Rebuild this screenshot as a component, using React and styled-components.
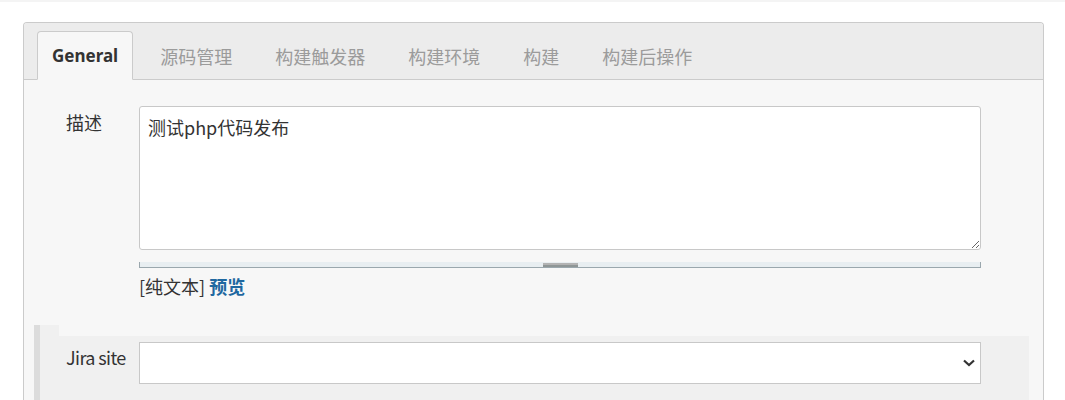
import React from 'react';
import styled, { createGlobalStyle } from 'styled-components';

const GlobalStyle = createGlobalStyle`
  body {
    margin: 0;
    background: #fff;
    font-family: "Noto Sans CJK SC", "Noto Sans", sans-serif;
    color: #333;
  }
`;

const TopStrip = styled.div`
  height: 2px;
  background: #f4f4f4;
`;

const Page = styled.div`
  padding: 20px 21px 0 23px;
`;

const Panel = styled.div`
  border: 1px solid #cbcbcb;
  border-bottom: none;
  border-radius: 4px 4px 0 0;
  background: #f7f7f7;
  height: 380px;
  overflow: hidden;
`;

const TabBar = styled.div`
  display: flex;
  align-items: flex-end;
  gap: 11px;
  padding: 8px 13px 0;
  background: #ececec;
  border-bottom: 1px solid #cbcbcb;
`;

const Tab = styled.div`
  height: 47px;
  display: flex;
  align-items: center;
  padding: 0 ${p => (p.active ? 14 : 15)}px;
  margin-bottom: -1px;
  border: 1px solid ${p => (p.active ? '#cbcbcb' : 'transparent')};
  border-bottom: 1px solid ${p => (p.active ? '#f7f7f7' : 'transparent')};
  border-radius: 4px 4px 0 0;
  background: ${p => (p.active ? '#f7f7f7' : 'transparent')};
  color: ${p => (p.active ? '#333' : '#9b9b9b')};
  font-weight: ${p => (p.active ? 700 : 400)};
  font-family: ${p => (p.active ? '"Noto Sans", "Noto Sans CJK SC", sans-serif' : 'inherit')};
  font-size: ${p => (p.active ? '17px' : '18px')};
`;

const Content = styled.div`
  padding-top: 26px;
`;

const Row = styled.div`
  display: grid;
  grid-template-columns: 73px 842px;
  padding-left: ${p => p.indent}px;
  align-items: start;
`;

const Label = styled.div`
  font-size: 18px;
  line-height: 24px;
  padding-top: ${p => p.top}px;
  letter-spacing: ${p => (p.tight ? '-0.6px' : '0')};
  color: #333;
`;

const TextArea = styled.textarea`
  box-sizing: border-box;
  width: 842px;
  height: 144px;
  display: block;
  margin: 0;
  padding: 7px 8px;
  border: 1px solid #c8c8c8;
  border-radius: 3px;
  background: #fff;
  font-family: "Noto Sans CJK SC", "Noto Sans", sans-serif;
  font-size: 18px;
  line-height: 26px;
  color: #333;
  resize: vertical;
  outline: none;
`;

const Grip = styled.div`
  margin-top: 12px;
  height: 5px;
  background: #e8eef1;
  border: 1px solid #9aa7ad;
  border-top: none;
  display: flex;
  justify-content: center;
`;

const GripHandle = styled.div`
  width: 35px;
  height: 2px;
  margin-top: 1px;
  background: #b3b3b3;
  border-bottom: 2px solid #8f9696;
`;

const Format = styled.div`
  margin-top: 7px;
  font-size: 18px;
  line-height: 22px;
  color: #333;
`;

const Preview = styled.a`
  color: #1f68a0;
  font-weight: 700;
  text-decoration: none;
`;

const Section = styled.div`
  margin: 28px 14px 0 10px;
  border-left: 6px solid #dcdcdc;
`;

const Notch = styled.div`
  width: 19px;
  height: 11px;
  background: #f0f0f0;
`;

const SectionBody = styled.div`
  background: #f0f0f0;
  padding-top: 6px;
  height: 60px;
`;

const SelectBox = styled.div`
  box-sizing: border-box;
  width: 842px;
  height: 42px;
  background: #fff;
  border: 1px solid #c8c8c8;
  display: flex;
  align-items: center;
  justify-content: flex-end;
  padding-right: 5px;
`;

const Chevron = () => (
  <svg width="12" height="8" viewBox="0 0 12 8">
    <path d="M1 1.5 L6 6 L11 1.5" fill="none" stroke="#333" strokeWidth="2.2" />
  </svg>
);

const tabs = ['General', '源码管理', '构建触发器', '构建环境', '构建', '构建后操作'];

export default function App() {
  return (
    <>
      <GlobalStyle />
      <TopStrip />
      <Page>
        <Panel>
          <TabBar>
            {tabs.map((t, i) => (
              <Tab key={t} active={i === 0}>
                {t}
              </Tab>
            ))}
          </TabBar>
          <Content>
            <Row indent={42}>
              <Label top={4}>描述</Label>
              <div>
                <TextArea defaultValue="测试php代码发布" />
                <Grip>
                  <GripHandle />
                </Grip>
                <Format>
                  [纯文本] <Preview href="#">预览</Preview>
                </Format>
              </div>
            </Row>
            <Section>
              <Notch />
              <SectionBody>
                <Row indent={26}>
                  <Label top={3} tight>Jira site</Label>
                  <SelectBox>
                    <Chevron />
                  </SelectBox>
                </Row>
              </SectionBody>
            </Section>
          </Content>
        </Panel>
      </Page>
    </>
  );
}
